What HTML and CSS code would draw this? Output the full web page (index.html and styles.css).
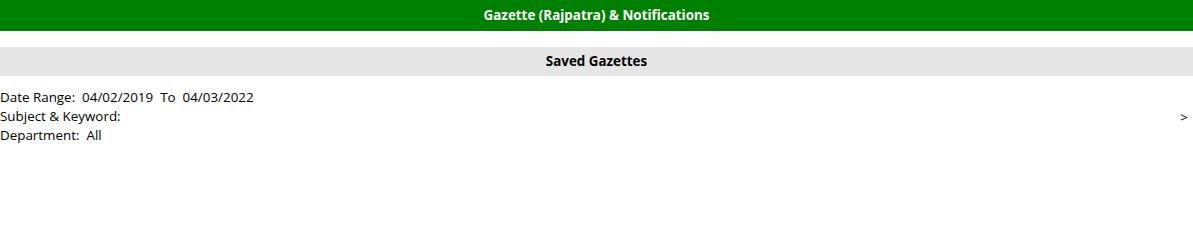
FILE: index.html
```html
<!DOCTYPE html>
<html>
<head>
<meta charset="utf-8">
<link rel="stylesheet" href="styles.css">
</head>
<body>
<div class="header">Gazette (Rajpatra) &amp; Notifications</div>
<div class="subheader">Saved Gazettes</div>
<div class="filters">
  <div class="lines">
    <div class="line">Date Range:&nbsp; 04/02/2019&nbsp; To&nbsp; 04/03/2022</div>
    <div class="line">Subject &amp; Keyword:</div>
    <div class="line">Department:&nbsp; All</div>
  </div>
  <div class="arrow">&gt;</div>
</div>
</body>
</html>
```
FILE: styles.css
```css
html, body {
  margin: 0;
  padding: 0;
  background: #ffffff;
  font-family: "Open Sans", "Noto Sans", "Liberation Sans", sans-serif;
  font-size: 13.4px;
  color: #000000;
}
.header {
  background: #008000;
  color: #ffffff;
  font-weight: bold;
  text-align: center;
  height: 31px;
  line-height: 31px;
}
.subheader {
  margin-top: 16px;
  background: #e6e6e6;
  font-weight: bold;
  text-align: center;
  height: 29px;
  line-height: 29px;
}
.filters {
  display: flex;
  align-items: center;
  padding-top: 12px;
}
.lines {
  flex: 1;
}
.line {
  line-height: 19px;
}
.arrow {
  padding-right: 5px;
}
```
